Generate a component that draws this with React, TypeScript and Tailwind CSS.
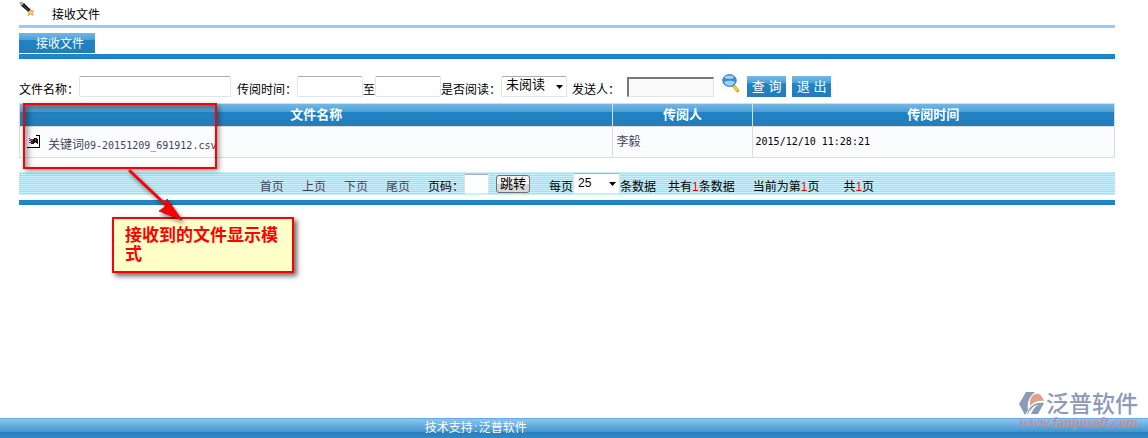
import type { ReactNode } from 'react'

interface FileRow {
  name: string
  sender: string
  time: string
}

const ROWS: FileRow[] = [
  { name: '关键词09-20151209_691912.csv', sender: '李毅', time: '2015/12/10 11:28:21' },
]

const PAGE_LINKS = ['首页', '上页', '下页', '尾页']

const BOX = 'rounded-xs border border-[#dfe3ec] border-t-[#abadb3] bg-white'
const GLOSS = 'bg-[linear-gradient(#74b8e4_0,#4b9fd6_35%,#2083c4_36%,#247cba_100%)]'
const BAR = 'h-[5px] bg-[linear-gradient(#2482c0,#1f87cc,#247cba)]'

function WandIcon() {
  return (
    <svg width="16" height="17" viewBox="0 0 16 17" aria-hidden="true">
      <path d="M.5 2 2 .8l3 1.400 6.500 6.300L9.500 11 3 5.500Z" fill="#15151a" />
      <path d="M.4 2 2.200.8 4.800 2.600 3 4.400Z" fill="#b9bec8" />
      <path d="M4.500 4.500 9 9" stroke="#70707c" strokeWidth=".8" />
      <path d="m11.500 7 1 2.400 3-.2-2 2.400 1.400 3.600-3-1.600-3.400 1.600 1-3.600L7.500 10.500l3-.6Z" fill="#f09a38" />
      <path d="m11.700 9.500.5 1.500 1.300.2-1.100.8-.1 1.300-1-.9-1.300.2.800-1.200-.6-1.200 1.200.2Z" fill="#ffee90" />
    </svg>
  )
}

function SearchIcon() {
  return (
    <svg width="18" height="20" viewBox="0 0 18 20" aria-hidden="true">
      <path d="m9.500 11.500 2.300-1.500 5 6c.7 1.400-.8 2.600-2 1.800Z" fill="#e9b41c" stroke="#b08420" strokeWidth=".6" />
      <path d="m11.500 12 3.800 4.200" stroke="#ffd83c" strokeWidth="1.600" />
      <ellipse cx="7.500" cy="6.500" rx="6.800" ry="6" fill="#3f8acb" stroke="#5288bd" />
      <path d="M2 8c3-1.600 8-1.600 11 0-.8 2.400-3 3.800-5.500 3.800S2.800 10.400 2 8Z" fill="#8ed8f6" />
      <ellipse cx="7.200" cy="3.300" rx="4.600" ry="1.700" fill="#a5cfee" />
    </svg>
  )
}

function FileIcon() {
  return (
    <svg width="14" height="14" viewBox="0 0 14 14" shapeRendering="crispEdges" aria-hidden="true">
      <path d="M0 0h13v13H0z" fill="#fff" />
      <path d="M9 0h4v13H0v-1h12V1H9z" fill="#000" />
      <path d="M4 4h3v-1h3v1h1v5h-1v-1H7v1H4z" fill="#101010" />
      <path d="M4 4h2v2H4z" fill="#e02030" />
      <path d="M4 7h2v1H4z" fill="#2038d0" />
      <path d="M8 4h1v2H8z" fill="#207838" />
      <path d="M8 7h1v1H8z" fill="#a89820" />
      <path d="M2 3h1v1H2zM2 7h2v1H2z" fill="#2038d0" />
      <path d="M2 5h2v1H2zM3 4h1v1H3z" fill="#c02030" />
    </svg>
  )
}

function Caret() {
  return (
    <svg className="pointer-events-none absolute right-1 top-[9px]" width="7" height="4" viewBox="0 0 7 4" aria-hidden="true">
      <path d="M0 0h7L3.500 4Z" fill="#000" />
    </svg>
  )
}

function GlossButton({ children }: { children: ReactNode }) {
  return (
    <button type="button" className={`h-[21px] w-[39px] whitespace-pre text-[13px] leading-5 text-white ${GLOSS}`}>
      {children}
    </button>
  )
}

function Filters() {
  return (
    <form className="flex h-[27px] items-end pb-[6px]">
      <label htmlFor="fileName" className="leading-[13px]">文件名称：</label>
      <input id="fileName" type="text" className={`h-[21px] w-[152px] ${BOX}`} />
      <label htmlFor="from" className="ml-[6px] leading-[13px]">传阅时间：</label>
      <input id="from" type="text" className={`h-[21px] w-[66px] ${BOX}`} />
      <label htmlFor="to" className="leading-[13px]">至</label>
      <input id="to" type="text" className={`h-[21px] w-[66px] ${BOX}`} />
      <label htmlFor="read" className="leading-[13px]">是否阅读：</label>
      <div className="relative">
        <select id="read" className={`block h-[21px] w-[66px] appearance-none pb-[3px] pl-[4px] text-[13px] leading-4 ${BOX}`}>
          <option>未阅读</option>
          <option>已阅读</option>
        </select>
        <Caret />
      </div>
      <label htmlFor="sender" className="ml-[5px] leading-[13px]">发送人：</label>
      <input
        id="sender"
        type="text"
        className="ml-[7px] h-[20px] w-[87px] border border-[#e3e3e3] border-l-2 border-t-2 border-l-[#777] border-t-[#777] bg-[#fafafa]"
      />
      <button type="button" aria-label="选择发送人" className="-mt-[2px] ml-2 self-start">
        <SearchIcon />
      </button>
      <div className="ml-[7px] flex gap-[6px]">
        <GlossButton>查 询</GlossButton>
        <GlossButton>退 出</GlossButton>
      </div>
    </form>
  )
}

function FileTable() {
  return (
    <table className="w-full table-fixed border-collapse border border-[#dcdcdc]">
      <colgroup>
        <col className="w-[54.2%]" />
        <col className="w-[12.7%]" />
        <col />
      </colgroup>
      <thead>
        <tr className={`h-[23px] text-[13px] leading-5 text-white ${GLOSS}`}>
          <th className="border border-[#dcdcdc] pb-px">文件名称</th>
          <th className="border border-[#dcdcdc] pb-px">传阅人</th>
          <th className="border border-[#dcdcdc] pb-px">传阅时间</th>
        </tr>
      </thead>
      <tbody>
        {ROWS.map(row => (
          <tr key={row.name} className="h-[31px] bg-[#fbfcfe]">
            <td className="border border-[#dcdcdc] pl-[7px]">
              <a href="#file" className="flex items-center gap-[7px] text-[#44445a]">
                <FileIcon />
                <span className="pt-[6px]">
                  {row.name.slice(0, 3)}
                  <span className="font-['DejaVu_Sans_Mono',monospace] text-[10px]">{row.name.slice(3)}</span>
                </span>
              </a>
            </td>
            <td className="border border-[#dcdcdc] pl-[3px] text-[#44445a]">{row.sender}</td>
            <td className="border border-[#dcdcdc] pb-px pl-[3px] font-['DejaVu_Sans_Mono',monospace] text-[10px]">{row.time}</td>
          </tr>
        ))}
      </tbody>
    </table>
  )
}

function Count() {
  return <span className="text-[12px] text-[#f00]">1</span>
}

function Pager() {
  return (
    <div className="flex h-[23px] items-center justify-center bg-[repeating-linear-gradient(#c9f1fb_0_1px,#a8dcea_1px_2px)] leading-[15px]">
      <nav className="flex gap-[18px] pt-[7px] text-[#44445a]">
        {PAGE_LINKS.map(link => (
          <a key={link} href="#page">{link}</a>
        ))}
      </nav>
      <label htmlFor="page" className="ml-[18px] pt-[7px]">页码：</label>
      <input id="page" type="text" className={`h-[20px] w-[25px] ${BOX}`} />
      <button
        type="button"
        className="ml-[7px] h-[18px] w-[34px] rounded-[3px] border border-[#707070] bg-[linear-gradient(#f4f4f4_50%,#d8d8d8_51%)] text-[13px] leading-4"
      >
        跳转
      </button>
      <label htmlFor="size" className="ml-[19px] pt-[7px]">每页</label>
      <div className="relative">
        <select
          id="size"
          className={`block h-[21px] w-[47px] appearance-none pb-[2px] pl-[4px] text-[12px] leading-4 ${BOX}`}
        >
          <option>25</option>
          <option>50</option>
        </select>
        <Caret />
      </div>
      <span className="pt-[7px]">条数据</span>
      <span className="ml-3 pt-[7px]">共有<Count />条数据</span>
      <span className="ml-[18px] pt-[7px]">当前为第<Count />页</span>
      <span className="ml-6 pt-[7px]">共<Count />页</span>
    </div>
  )
}

// Red frame, arrow and note that lie over the list
function Annotation() {
  return (
    <>
      <div className="pointer-events-none absolute left-1 top-0 h-[66px] w-[194px] border-2 border-[#f00] shadow-[2px_2px_5px_rgba(0,0,0,0.4),inset_3px_3px_6px_rgba(0,0,0,0.4)]" />
      <div className="absolute left-[93px] top-[114px] w-[182px] border-2 border-[#f00] bg-[#ffffc8] py-[7px] pl-[11px] pr-[14px] text-[17px] font-bold leading-[19px] text-[#f00] shadow-[3px_3px_5px_rgba(0,0,0,0.6)]">
        接收到的文件显示模式
      </div>
      <svg
        className="pointer-events-none absolute left-[105px] top-[62px] drop-shadow-[2px_3px_2px_rgba(0,0,0,0.5)]"
        width="64"
        height="60"
        viewBox="0 0 64 60"
        aria-hidden="true"
      >
        <path d="m6 6 37 35" stroke="#f00" strokeWidth="3" strokeLinecap="round" />
        <path d="M58 55 35 46l6-4 2-8Z" fill="#f00" stroke="#c00" strokeWidth=".8" />
      </svg>
    </>
  )
}

function Watermark() {
  return (
    <div className="absolute bottom-2 right-[10px] text-[#8c9ab8]">
      <div className="flex items-center justify-end gap-px">
        <svg width="26" height="24" viewBox="0 0 26 24" aria-hidden="true">
          <path d="M7 0h9l-4 4c-3 4-4 9-3 14l-3 5-6-11Z" fill="#8c9ab8" />
          <path d="M11 14C10 5 15 1 20 2c2 1 4 4 5 7-6-1-10 1-14 5Z" fill="#e0a189" />
          <path d="M8 23c1-8 8-13 17-12l-6 11h-7l2-4c2-3 3-4 6-5-6 0-9 5-12 10Z" fill="#8c9ab8" />
        </svg>
        <span className="text-[23px] font-medium leading-6">泛普软件</span>
      </div>
      <div className="text-right font-['Liberation_Serif',serif] text-[14px] font-bold leading-[14px] text-[#b8949e]">
        www.fanpusoft.com
      </div>
    </div>
  )
}

export default function App() {
  return (
    <div className="flex min-h-screen flex-col bg-white font-['Liberation_Sans','Noto_Sans_CJK_SC',sans-serif] text-[12px] text-black">
      <main className="flex-1 pb-6 pl-[19px] pr-[33px]">
        <header className="flex h-[28px] gap-[17px] border-b-[3px] border-[#9bcaf0] pt-px">
          <WandIcon />
          <h1 className="pt-[5px] leading-[18px]">接收文件</h1>
        </header>
        <div className="mt-[5px]">
          <a href="#received" className={`flex h-[20px] w-[76px] items-center pl-[17px] pt-px text-white ${GLOSS}`}>接收文件</a>
        </div>
        <div className={`mt-px ${BAR}`} />
        <div className="mt-[17px]">
          <Filters />
        </div>
        <div className="relative">
          <FileTable />
          <Annotation />
          <div className="mt-[14px]">
            <Pager />
          </div>
          <div className={`mt-[5px] ${BAR}`} />
        </div>
      </main>
      <footer className="relative h-[20px] border-t border-[#69a7ec] bg-[linear-gradient(#8fc6ea_0,#4295d0_68%,#2a7fbd_69%,#3088c8_100%)] pl-[37%] leading-[18px] text-white">
        技术支持<span className="inline-block w-[6px] text-center">:</span>泛普软件
        <Watermark />
      </footer>
    </div>
  )
}
